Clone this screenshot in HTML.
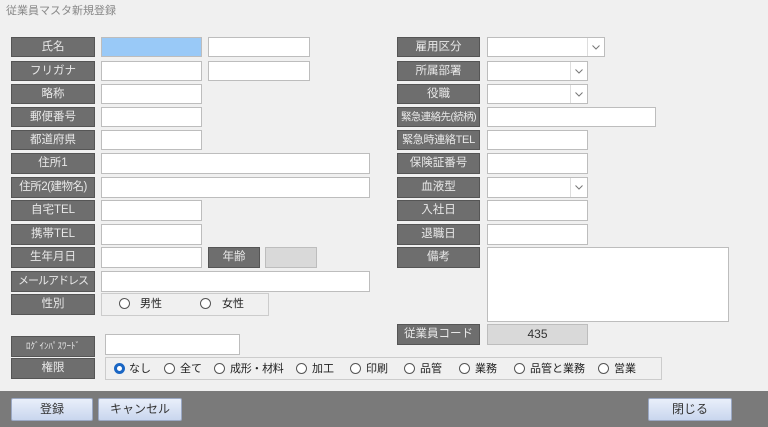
<!DOCTYPE html><html><head><meta charset="utf-8"><style>
body{margin:0;width:768px;height:427px;background:#f0f0f0;position:relative;overflow:hidden;font-family:"Liberation Sans","Noto Sans CJK JP",sans-serif;font-size:12px}
.a{position:absolute;box-sizing:border-box}
.l{background:#6e6e6e;border:1px solid #555;color:#e8e8e8;text-align:center;line-height:18px;font-size:11.5px;white-space:nowrap;overflow:hidden}
.i{background:#fff;border:1px solid #bdbdbd}
.g{background:#d9d9d9;border:1px solid #bdbdbd;text-align:center;line-height:19px;color:#333}
.dd{position:absolute;right:0;top:0;bottom:0;width:16px;border-left:1px solid #ddd}
.dd svg{position:absolute;left:4px;top:7px}
.r{position:absolute;width:11px;height:11px;border:1px solid #555;border-radius:50%;box-sizing:border-box;background:#fff}
.t{position:absolute;color:#222;font-size:11px;line-height:14px;white-space:nowrap}
.b{background:linear-gradient(#e9effa,#c9d6ee);border:1px solid #9aa8c4;border-radius:2px;text-align:center;line-height:20px;color:#333}
</style></head><body>
<div class="a" style="left:6px;top:2px;color:#888;font-size:11px">従業員マスタ新規登録</div>

<div class="a l" style="left:11px;top:37px;width:84px;height:20px">氏名</div>
<div class="a i" style="left:101px;top:37px;width:101px;height:20px;background:#99c9f7"></div>
<div class="a i" style="left:208px;top:37px;width:102px;height:20px"></div>
<div class="a l" style="left:11px;top:61px;width:84px;height:20px">フリガナ</div>
<div class="a i" style="left:101px;top:61px;width:101px;height:20px"></div>
<div class="a i" style="left:208px;top:61px;width:102px;height:20px"></div>
<div class="a l" style="left:11px;top:84px;width:84px;height:20px">略称</div>
<div class="a i" style="left:101px;top:84px;width:101px;height:20px"></div>
<div class="a l" style="left:11px;top:107px;width:84px;height:20px">郵便番号</div>
<div class="a i" style="left:101px;top:107px;width:101px;height:20px"></div>
<div class="a l" style="left:11px;top:130px;width:84px;height:20px">都道府県</div>
<div class="a i" style="left:101px;top:130px;width:101px;height:20px"></div>
<div class="a l" style="left:11px;top:153px;width:84px;height:21px">住所1</div>
<div class="a i" style="left:101px;top:153px;width:269px;height:21px"></div>
<div class="a l" style="left:11px;top:177px;width:84px;height:21px;letter-spacing:-0.5px">住所2(建物名)</div>
<div class="a i" style="left:101px;top:177px;width:269px;height:21px"></div>
<div class="a l" style="left:11px;top:200px;width:84px;height:21px">自宅TEL</div>
<div class="a i" style="left:101px;top:200px;width:101px;height:21px"></div>
<div class="a l" style="left:11px;top:224px;width:84px;height:21px">携帯TEL</div>
<div class="a i" style="left:101px;top:224px;width:101px;height:21px"></div>
<div class="a l" style="left:11px;top:247px;width:84px;height:21px">生年月日</div>
<div class="a i" style="left:101px;top:247px;width:101px;height:21px"></div>
<div class="a l" style="left:208px;top:247px;width:52px;height:21px">年齢</div>
<div class="a g" style="left:265px;top:247px;width:52px;height:21px"></div>
<div class="a l" style="left:11px;top:271px;width:84px;height:21px;letter-spacing:-1px;font-size:11px">メールアドレス</div>
<div class="a i" style="left:101px;top:271px;width:269px;height:21px"></div>
<div class="a l" style="left:11px;top:294px;width:84px;height:21px">性別</div>
<div class="a" style="left:101px;top:293px;width:168px;height:23px;border:1px solid #ccc"></div>
<div class="r" style="left:119px;top:298px"></div><div class="t" style="left:140px;top:297px">男性</div>
<div class="r" style="left:200px;top:298px"></div><div class="t" style="left:222px;top:297px">女性</div>

<div class="a l" style="left:11px;top:336px;width:84px;height:21px;font-size:9px">ﾛｸﾞｲﾝﾊﾟｽﾜｰﾄﾞ</div>
<div class="a i" style="left:105px;top:334px;width:135px;height:21px"></div>
<div class="a l" style="left:11px;top:358px;width:84px;height:21px">権限</div>
<div class="a" style="left:105px;top:357px;width:557px;height:23px;border:1px solid #ccc"></div>
<div class="r" style="left:114px;top:363px;border:3px solid #1a66c4"></div><div class="t" style="left:129px;top:362px">なし</div>
<div class="r" style="left:164px;top:363px"></div><div class="t" style="left:180px;top:362px">全て</div>
<div class="r" style="left:214px;top:363px"></div><div class="t" style="left:230px;top:362px;letter-spacing:-0.3px">成形・材料</div>
<div class="r" style="left:296px;top:363px"></div><div class="t" style="left:312px;top:362px">加工</div>
<div class="r" style="left:350px;top:363px"></div><div class="t" style="left:366px;top:362px">印刷</div>
<div class="r" style="left:404px;top:363px"></div><div class="t" style="left:420px;top:362px">品管</div>
<div class="r" style="left:459px;top:363px"></div><div class="t" style="left:475px;top:362px">業務</div>
<div class="r" style="left:514px;top:363px"></div><div class="t" style="left:530px;top:362px">品管と業務</div>
<div class="r" style="left:598px;top:363px"></div><div class="t" style="left:614px;top:362px">営業</div>

<div class="a l" style="left:397px;top:37px;width:83px;height:20px">雇用区分</div>
<div class="a i" style="left:487px;top:37px;width:118px;height:20px"><div class="dd"><svg width="8" height="5"><path d="M0.5 0.5L4 4L7.5 0.5" fill="none" stroke="#777"/></svg></div></div>
<div class="a l" style="left:397px;top:61px;width:83px;height:20px">所属部署</div>
<div class="a i" style="left:487px;top:61px;width:101px;height:20px"><div class="dd"><svg width="8" height="5"><path d="M0.5 0.5L4 4L7.5 0.5" fill="none" stroke="#777"/></svg></div></div>
<div class="a l" style="left:397px;top:84px;width:83px;height:20px">役職</div>
<div class="a i" style="left:487px;top:84px;width:101px;height:20px"><div class="dd"><svg width="8" height="5"><path d="M0.5 0.5L4 4L7.5 0.5" fill="none" stroke="#777"/></svg></div></div>
<div class="a l" style="left:397px;top:107px;width:83px;height:20px;font-size:10.5px;letter-spacing:-0.6px">緊急連絡先(続柄)</div>
<div class="a i" style="left:487px;top:107px;width:169px;height:20px"></div>
<div class="a l" style="left:397px;top:130px;width:83px;height:20px;font-size:11px;letter-spacing:-0.3px">緊急時連絡TEL</div>
<div class="a i" style="left:487px;top:130px;width:101px;height:20px"></div>
<div class="a l" style="left:397px;top:153px;width:83px;height:21px">保険証番号</div>
<div class="a i" style="left:487px;top:153px;width:101px;height:21px"></div>
<div class="a l" style="left:397px;top:177px;width:83px;height:21px">血液型</div>
<div class="a i" style="left:487px;top:177px;width:101px;height:21px"><div class="dd"><svg width="8" height="5"><path d="M0.5 0.5L4 4L7.5 0.5" fill="none" stroke="#777"/></svg></div></div>
<div class="a l" style="left:397px;top:200px;width:83px;height:21px">入社日</div>
<div class="a i" style="left:487px;top:200px;width:101px;height:21px"></div>
<div class="a l" style="left:397px;top:224px;width:83px;height:21px">退職日</div>
<div class="a i" style="left:487px;top:224px;width:101px;height:21px"></div>
<div class="a l" style="left:397px;top:247px;width:83px;height:21px">備考</div>
<div class="a i" style="left:487px;top:247px;width:242px;height:75px"></div>
<div class="a l" style="left:397px;top:324px;width:83px;height:21px">従業員コード</div>
<div class="a g" style="left:487px;top:324px;width:101px;height:21px">435</div>

<div class="a" style="left:0;top:391px;width:768px;height:36px;background:#7a7a7a"></div>
<div class="a b" style="left:11px;top:398px;width:82px;height:23px">登録</div>
<div class="a b" style="left:98px;top:398px;width:84px;height:23px">キャンセル</div>
<div class="a b" style="left:648px;top:398px;width:84px;height:23px">閉じる</div>
</body></html>
